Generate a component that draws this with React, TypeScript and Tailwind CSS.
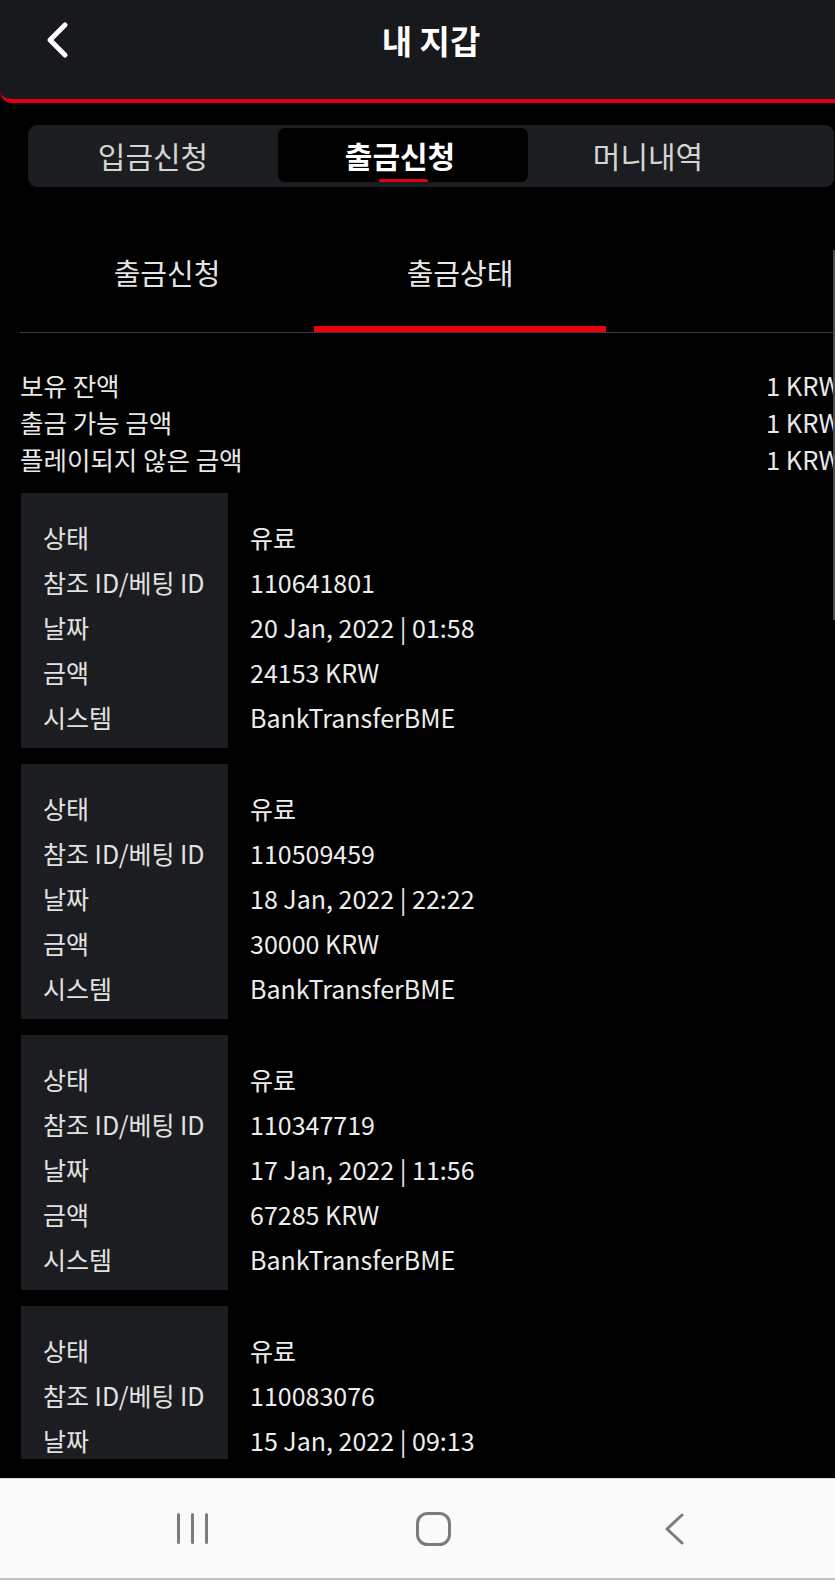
import React from 'react';

const cards = [
  { id: '110641801', date: '20 Jan, 2022 | 01:58', amount: '24153 KRW' },
  { id: '110509459', date: '18 Jan, 2022 | 22:22', amount: '30000 KRW' },
  { id: '110347719', date: '17 Jan, 2022 | 11:56', amount: '67285 KRW' },
  { id: '110083076', date: '15 Jan, 2022 | 09:13', amount: '0 KRW' },
];

const labels = ['상태', '참조 ID/베팅 ID', '날짜', '금액', '시스템'];

const balances = [
  ['보유 잔액', '1 KRW'],
  ['출금 가능 금액', '1 KRW'],
  ['플레이되지 않은 금액', '1 KRW'],
];

function TxCard({ id, date, amount }: { id: string; date: string; amount: string }) {
  const values = ['유료', id, date, amount, 'BankTransferBME'];
  return (
    <div className="flex h-[255px] mb-4 text-[25px] leading-[45px]">
      <div className="w-[207px] shrink-0 bg-[#1c1d21] pt-[22px] pb-[8px] pl-[22px] text-[#e2e2e2]">
        {labels.map((l) => (
          <div key={l} className="h-[45px] whitespace-nowrap">{l}</div>
        ))}
      </div>
      <div className="pt-[22px] pl-[22px] text-[#ededed]">
        {values.map((v, i) => (
          <div key={i} className="h-[45px] whitespace-nowrap">{v}</div>
        ))}
      </div>
    </div>
  );
}

export default function App() {
  return (
    <div className="relative w-[835px] h-[1580px] overflow-hidden bg-black flex flex-col font-['Noto_Sans_CJK_KR',sans-serif]">
      <div className="w-[862px] h-[1459px] shrink-0 overflow-hidden flex flex-col">
        {/* header */}
        <div className="h-[103px] shrink-0 bg-[#18191d] rounded-b-[12px] border-b-4 border-[#e10012] grid grid-cols-[100px_1fr_100px]">
          <div className="pl-[45px] pt-[20px]">
            <svg width="26" height="40" viewBox="0 0 26 40" fill="none">
              <path d="M20 5 L5 20 L20 35" stroke="#ffffff" strokeWidth="5" strokeLinecap="round" strokeLinejoin="round" />
            </svg>
          </div>
          <div className="flex items-center justify-center pb-[18px] text-[33px] font-bold leading-none text-white">내 지갑</div>
          <div />
        </div>

        {/* segmented tabs */}
        <div className="mx-[28px] mt-[22px] h-[62px] shrink-0 rounded-[9px] bg-[#1c1d21] flex items-start pt-[3px]">
          <div className="w-[250px] h-[54px] flex flex-col items-center pt-[12px]">
            <span className="text-[30px] leading-none text-[#d4d4d4]">입금신청</span>
            <span className="mt-[9px] w-[49px] h-[3px]" />
          </div>
          <div className="w-[250px] h-[54px] rounded-[7px] bg-black flex flex-col items-center pt-[12px]">
            <span className="text-[30px] leading-none font-bold text-white pr-[6px]">출금신청</span>
            <span className="mt-[9px] w-[49px] h-[3px] rounded-full bg-[#e10012]" />
          </div>
          <div className="w-[240px] h-[54px] flex flex-col items-center pt-[12px]">
            <span className="text-[30px] leading-none text-[#d4d4d4]">머니내역</span>
            <span className="mt-[9px] w-[49px] h-[3px]" />
          </div>
        </div>

        {/* sub tabs */}
        <div className="ml-[20px] mt-[28px] shrink-0 flex border-b border-[#3a3b40]">
          <div className="w-[294px] h-[117px] pt-[5px] flex items-center justify-center border-b-[6px] border-transparent text-[29px] text-[#e4e4e4]">
            출금신청
          </div>
          <div className="w-[292px] h-[117px] pt-[5px] flex items-center justify-center border-b-[6px] border-[#e8000b] text-[29px] text-[#e8e8e8]">
            출금상태
          </div>
        </div>

        {/* balances */}
        <div className="ml-[20px] mr-[21px] mt-[33px] shrink-0 text-[25.5px] leading-[37px] text-[#e8e8e8]">
          {balances.map(([k, v]) => (
            <div key={k} className="flex justify-between">
              <span>{k}</span>
              <span>{v}</span>
            </div>
          ))}
        </div>

        {/* transactions */}
        <div className="ml-[21px] mt-[16px] shrink-0">
          {cards.map((c) => (
            <TxCard key={c.id} {...c} />
          ))}
        </div>
      </div>

      <div className="h-[19px] shrink-0 bg-black" />

      {/* android nav bar */}
      <div className="h-[102px] shrink-0 bg-[#fafafa] border-t border-[#d6d6d6] border-b-2 border-b-[#c4c4c4] flex items-center pl-[152px] gap-[161px]">
        <div className="w-[80px] flex justify-center">
          <svg width="31" height="31" viewBox="0 0 31 31" fill="#7c7c7c">
            <rect x="0" y="0" width="3" height="31" rx="1.5" />
            <rect x="14" y="0" width="3" height="31" rx="1.5" />
            <rect x="28" y="0" width="3" height="31" rx="1.5" />
          </svg>
        </div>
        <div className="w-[80px] flex justify-center">
          <svg width="35" height="34" viewBox="0 0 35 34" fill="none">
            <rect x="1.5" y="1.5" width="32" height="31" rx="10" stroke="#7c7c7c" strokeWidth="3" />
          </svg>
        </div>
        <div className="w-[80px] flex justify-center">
          <svg width="22" height="32" viewBox="0 0 22 32" fill="none">
            <path d="M19 2 L4 16 L19 30" stroke="#7c7c7c" strokeWidth="3" strokeLinecap="round" strokeLinejoin="round" />
          </svg>
        </div>
      </div>

      {/* scroll indicator */}
      <div className="absolute right-0 top-[250px] w-[2px] h-[370px] bg-[#4b4b4b]" />
    </div>
  );
}
